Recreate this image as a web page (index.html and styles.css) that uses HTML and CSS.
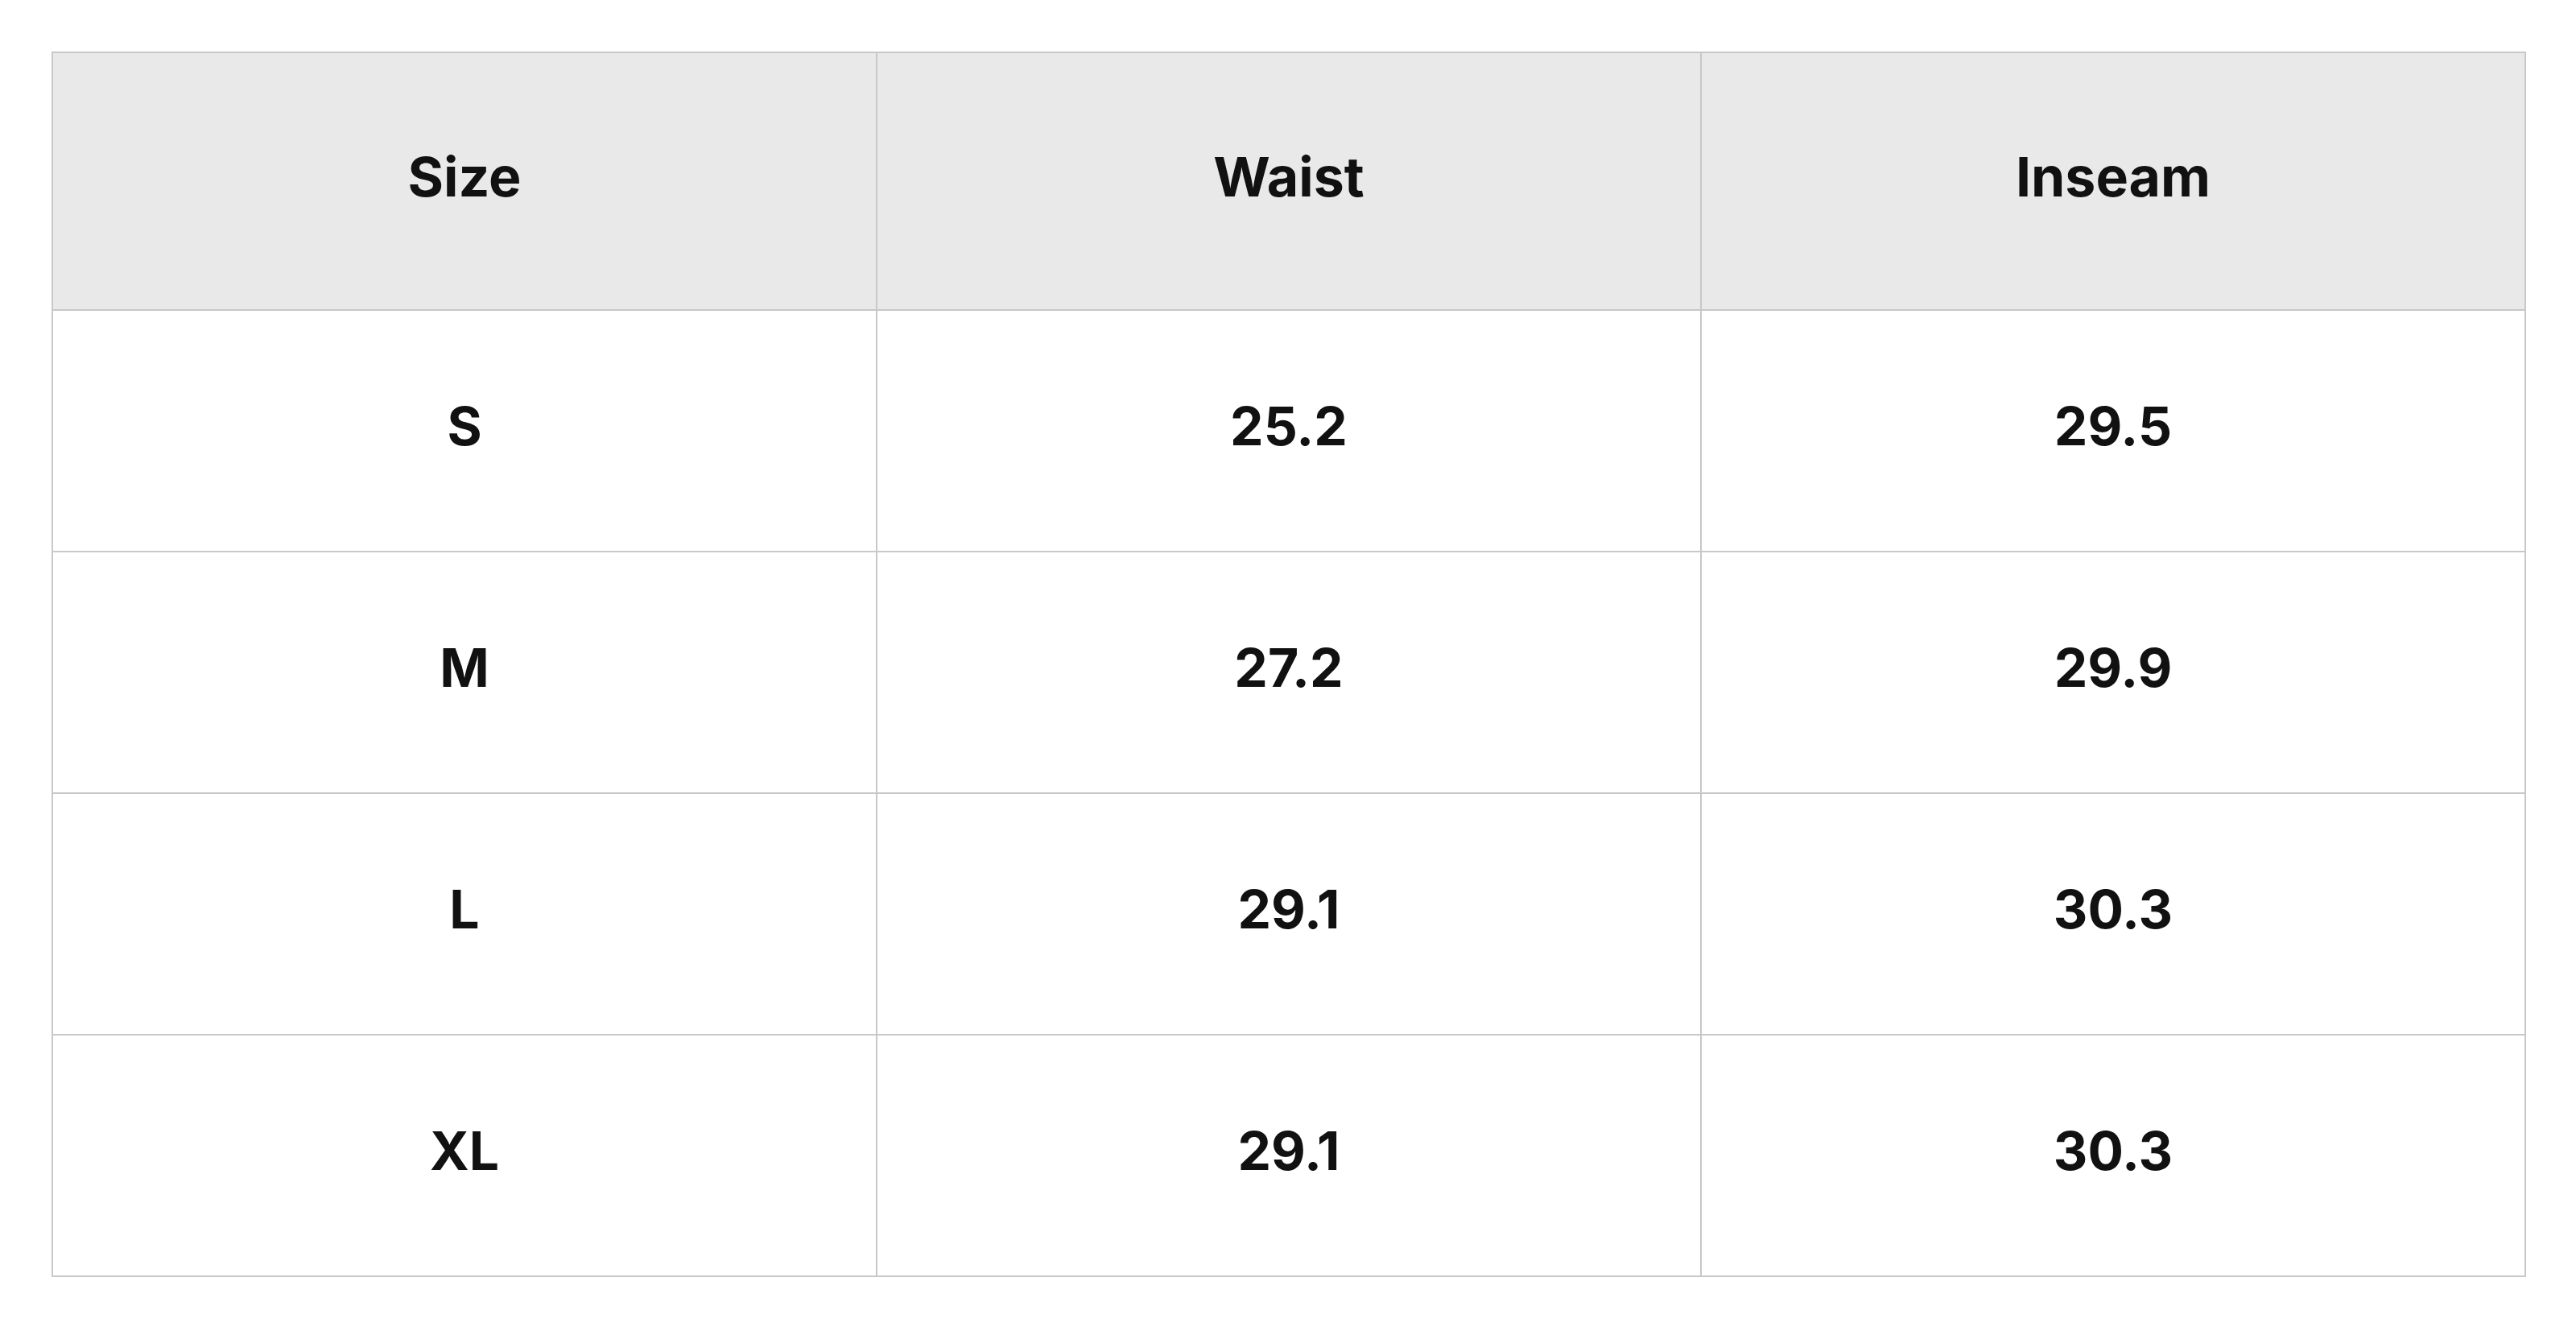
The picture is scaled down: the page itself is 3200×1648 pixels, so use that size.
FILE: index.html
```html
<!DOCTYPE html>
<html lang="en">
<head>
<meta charset="utf-8">
<title>Size chart</title>
<link rel="stylesheet" href="styles.css">
</head>
<body>
<table class="size-table">
  <thead>
    <tr class="head-row">
      <th>Size</th>
      <th>Waist</th>
      <th>Inseam</th>
    </tr>
  </thead>
  <tbody>
    <tr class="body-row"><td>S</td><td>25.2</td><td>29.5</td></tr>
    <tr class="body-row"><td>M</td><td>27.2</td><td>29.9</td></tr>
    <tr class="body-row"><td>L</td><td>29.1</td><td>30.3</td></tr>
    <tr class="body-row"><td>XL</td><td>29.1</td><td>30.3</td></tr>
  </tbody>
</table>
</body>
</html>
```
FILE: styles.css
```css
html, body {
  background: #ffffff;
}
body {
  margin: 64px 62px 64px 64px;
  font-family: Inter, "Liberation Sans", sans-serif;
  color: #111111;
}
.size-table {
  width: 100%;
  border-collapse: collapse;
  table-layout: fixed;
}
.size-table th,
.size-table td {
  border: 2px solid #c8c8c8;
  text-align: center;
  vertical-align: middle;
  font-size: 66px;
  font-weight: 700;
  padding: 0 0 12px 0;
}
.head-row th {
  background: #e9e9e9;
  height: 306px;
  font-size: 68px;
}
.body-row td {
  height: 286px;
}
```
